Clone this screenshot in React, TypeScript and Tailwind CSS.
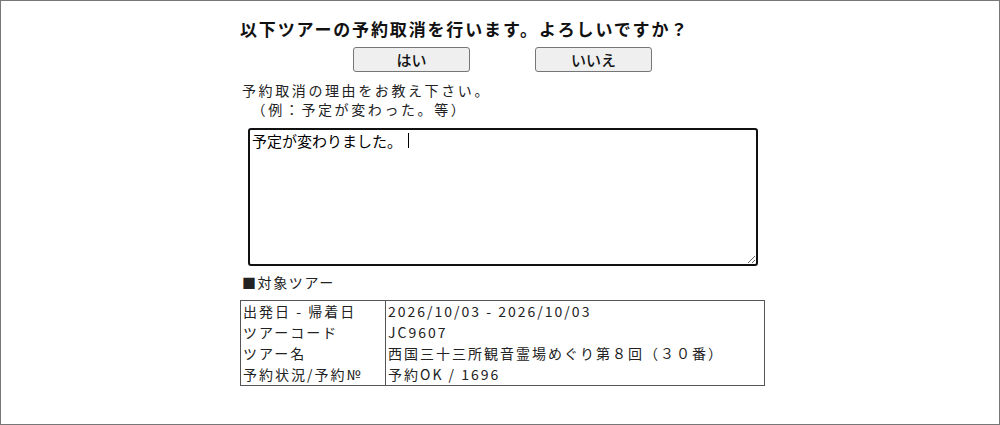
import { useEffect, useRef } from "react";

const jp = { fontFamily: '"Noto Sans CJK JP", "Noto Sans", sans-serif' };

const rows = [
  ["出発日 - 帰着日", "2026/10/03 - 2026/10/03"],
  ["ツアーコード", "JC9607"],
  ["ツアー名", "西国三十三所観音霊場めぐり第８回（３０番）"],
  ["予約状況/予約№", "予約OK / 1696"],
];

const App = () => {
  const ref = useRef<HTMLTextAreaElement>(null);

  useEffect(() => {
    const el = ref.current;
    if (el) {
      el.focus();
      el.setSelectionRange(el.value.length, el.value.length);
    }
  }, []);

  return (
    <div
      className="w-full h-[425px] border border-[#777] bg-white text-black pl-[5px] overflow-hidden"
      style={jp}
    >
      <div className="w-[525px] mx-auto pt-[15px]">
        <h1 className="text-[17px] leading-[26px] font-bold tracking-[1.85px] text-[#111]">
          以下ツアーの予約取消を行います。よろしいですか？
        </h1>

        <div className="flex justify-center gap-[65px] mt-[5px]">
          <button className="w-[117px] h-[25px] bg-[#efefef] border border-[#767676] rounded-[3px] text-[15px] leading-none font-medium text-[#111]">
            はい
          </button>
          <button className="w-[117px] h-[25px] bg-[#efefef] border border-[#767676] rounded-[3px] text-[15px] leading-none font-medium text-[#111]">
            いいえ
          </button>
        </div>

        <div className="mt-[9px] pl-[2px] text-[14px] leading-[19px] tracking-[2.6px] text-[#222]">
          <p>予約取消の理由をお教え下さい。</p>
          <p>　（例：予定が変わった。等）</p>
        </div>

        <div className="relative mt-[9px] ml-[8px] w-[510px]">
          <textarea
            ref={ref}
            defaultValue="予定が変わりました。 "
            className="block w-[510px] h-[138px] border-2 border-[#111] rounded-[3px] px-[2px] py-[2px] text-[15px] leading-[18px] text-black outline-none resize caret-transparent"
            style={jp}
          />
          {/* caret */}
          <span className="absolute left-[160px] top-[5px] w-px h-[15px] bg-black" />
        </div>

        <p className="mt-[6px] pl-[2px] text-[14px] leading-[20px] tracking-[1.6px] text-[#222]">
          ■対象ツアー
        </p>

        <table className="mt-[8px] w-[525px] border border-[#555] border-collapse text-[14px] tracking-[2px] text-[#222]">
          <tbody>
            {rows.map(([label, value]) => (
              <tr key={label} className="h-[21px]">
                <td className="w-[145px] border-r border-[#555] pl-[2px] py-0 leading-[21px] whitespace-nowrap">
                  {label}
                </td>
                <td className="pl-[2px] py-0 leading-[21px] whitespace-nowrap">{value}</td>
              </tr>
            ))}
          </tbody>
        </table>
      </div>
    </div>
  );
};

export default App;
